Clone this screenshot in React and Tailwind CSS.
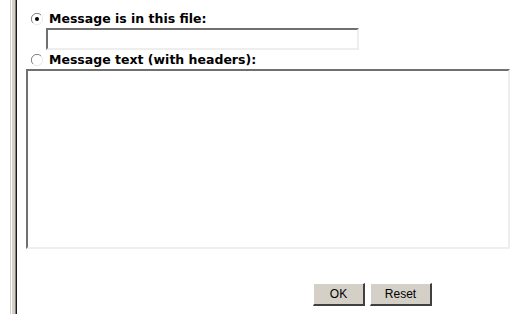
import React from 'react';

function Radio({ checked }) {
    return (
        <svg width="12" height="12" viewBox="0 0 12 12" className="block">
            <circle cx="6" cy="6" r="5.5" fill="#ffffff" />
            <path d="M10 2 A5.5 5.5 0 0 0 2 10" fill="none" stroke="#808080" strokeWidth="1" />
            <path d="M2 10 A5.5 5.5 0 0 0 10 2" fill="none" stroke="#e8e8e8" strokeWidth="1" />
            {checked && <circle cx="6" cy="6" r="2" fill="#000000" />}
        </svg>
    );
}

const btn =
    'h-[23px] bg-[#d4d0c8] border-t border-l border-t-white border-l-white border-b-2 border-r-2 border-b-[#404040] border-r-[#404040] text-[12px] text-black';

export default function App() {
    return (
        <div className="flex w-[518px] h-[314px] bg-white overflow-hidden" style={{ fontFamily: '"DejaVu Sans", Verdana, sans-serif' }}>
            {/* window frame edge */}
            <div className="ml-[10px] flex h-full">
                <div className="w-px bg-[#d4d0c8]" />
                <div className="w-px bg-white" />
                <div className="w-[3px] bg-[#d4d0c8]" />
                <div className="w-px bg-[#808080]" />
                <div className="w-px bg-[#1a1a1a]" />
            </div>

            <div className="flex flex-col pl-[9px] pt-[11px]">
                <label className="flex items-center gap-[6px] pl-[5px] h-[16px]">
                    <Radio checked />
                    <span className="text-[12.5px] font-bold text-black leading-none">Message is in this file:</span>
                </label>
                <input
                    type="text"
                    className="ml-[20px] mt-[1px] w-[313px] h-[22px] border-2 border-t-[#707070] border-l-[#707070] border-b-[#eeeeee] border-r-[#eeeeee] bg-white outline-none"
                />
                <label className="flex items-center gap-[6px] pl-[5px] mt-[2px] h-[16px]">
                    <Radio />
                    <span className="text-[12.5px] font-bold text-black leading-none">Message text (with headers):</span>
                </label>
                <textarea
                    className="mt-[1px] w-[484px] h-[180px] border-2 border-t-[#707070] border-l-[#707070] border-b-[#eeeeee] border-r-[#eeeeee] bg-white outline-none resize-none"
                />
                <div className="flex gap-[5px] ml-[287px] mt-[34px]">
                    <button className={`w-[52px] ${btn}`} style={{ fontFamily: '"Liberation Sans", Arial, sans-serif' }}>
                        OK
                    </button>
                    <button className={`w-[62px] ${btn}`} style={{ fontFamily: '"Liberation Sans", Arial, sans-serif' }}>
                        Reset
                    </button>
                </div>
            </div>
        </div>
    );
}
